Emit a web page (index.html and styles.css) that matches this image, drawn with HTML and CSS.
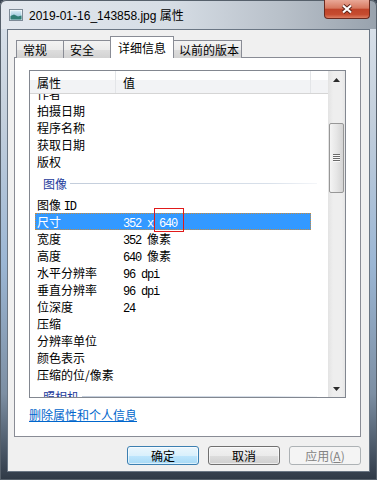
FILE: index.html
```html
<!DOCTYPE html>
<html lang="zh-CN">
<head>
    <meta charset="UTF-8">
    <meta name="viewport" content="width=device-width, initial-scale=1.0">
    <title>2019-01-16_143858.jpg 属性</title>
    <link rel="stylesheet" href="styles.css">
</head>
<body>
    <div class="window">
        <div class="titlebar">
            <svg class="app-icon" width="14" height="12" viewBox="0 0 14 12">
                <defs>
                    <linearGradient id="sky" x1="0" y1="0" x2="0" y2="1">
                        <stop offset="0" stop-color="#d9ecf5"/>
                        <stop offset="1" stop-color="#7fb6cf"/>
                    </linearGradient>
                </defs>
                <rect x="0.5" y="0.5" width="13" height="11" fill="#fff" stroke="#7d8a96"/>
                <rect x="1.5" y="1.5" width="11" height="9" fill="url(#sky)"/>
                <path d="M1.5 10.5 L1.5 7 L5 5.5 L9 7.5 L12.5 6.5 L12.5 10.5Z" fill="#2f7d74"/>
            </svg>
            <span class="title">2019-01-16_143858.jpg 属性</span>
            <div class="close">
                <svg width="12" height="10" viewBox="0 0 12 10">
                    <path d="M2 1.5 L10 8.5 M10 1.5 L2 8.5" stroke="#5a2218" stroke-width="4"/>
                    <path d="M2 1.5 L10 8.5 M10 1.5 L2 8.5" stroke="#fff" stroke-width="2.2"/>
                </svg>
            </div>
        </div>

        <div class="client">
            <div class="tabs">
                <div class="tab tab-general">常规</div>
                <div class="tab tab-security">安全</div>
                <div class="tab tab-details active">详细信息</div>
                <div class="tab tab-versions">以前的版本</div>
            </div>

            <div class="panel">
                <div class="list">
                    <div class="list-main">
                        <div class="head">
                            <div class="col-name">属性</div>
                            <div class="col-value">值</div>
                            <div class="col-fill"></div>
                        </div>
                        <div class="rows">
                            <div class="rows-inner">
                                <div class="row"><span class="k">作者</span></div>
                                <div class="row"><span class="k">拍摄日期</span></div>
                                <div class="row"><span class="k">程序名称</span></div>
                                <div class="row"><span class="k">获取日期</span></div>
                                <div class="row"><span class="k">版权</span></div>
                                <div class="group">图像</div>
                                <div class="row"><span class="k">图像 <span class="asc">ID</span></span></div>
                                <div class="row sel">
                                    <span class="k">尺寸</span>
                                    <span class="v"><span class="asc">352 x 640</span></span>
                                    <span class="mark"></span>
                                </div>
                                <div class="row"><span class="k">宽度</span><span class="v"><span class="asc">352 </span>像素</span></div>
                                <div class="row"><span class="k">高度</span><span class="v"><span class="asc">640 </span>像素</span></div>
                                <div class="row"><span class="k">水平分辨率</span><span class="v"><span class="asc">96 dpi</span></span></div>
                                <div class="row"><span class="k">垂直分辨率</span><span class="v"><span class="asc">96 dpi</span></span></div>
                                <div class="row"><span class="k">位深度</span><span class="v"><span class="asc">24</span></span></div>
                                <div class="row"><span class="k">压缩</span></div>
                                <div class="row"><span class="k">分辨率单位</span></div>
                                <div class="row"><span class="k">颜色表示</span></div>
                                <div class="row"><span class="k">压缩的位/像素</span></div>
                                <div class="group">照相机</div>
                            </div>
                        </div>
                    </div>
                    <div class="scroll">
                        <div class="sb-btn">
                            <svg width="7" height="4" viewBox="0 0 7 4"><path d="M0 4 L3.5 0 L7 4Z" fill="#2b2b2b"/></svg>
                        </div>
                        <div class="thumb">
                            <svg width="7" height="8" viewBox="0 0 7 8">
                                <path d="M0 0.5H7M0 2.5H7M0 4.5H7M0 6.5H7" stroke="#6a6a6a"/>
                                <path d="M0 1.5H7M0 3.5H7M0 5.5H7M0 7.5H7" stroke="#fafafa"/>
                            </svg>
                        </div>
                        <div class="sb-space"></div>
                        <div class="sb-btn">
                            <svg width="7" height="4" viewBox="0 0 7 4"><path d="M0 0 L7 0 L3.5 4Z" fill="#2b2b2b"/></svg>
                        </div>
                    </div>
                </div>
                <a class="remove-link" href="#">删除属性和个人信息</a>
            </div>

            <div class="buttons">
                <button class="btn btn-default">确定</button>
                <button class="btn">取消</button>
                <button class="btn" disabled>应用(<u>A</u>)</button>
            </div>
        </div>
    </div>
</body>
</html>
```

FILE: styles.css
```css
*{
    margin: 0;
    padding: 0;
    box-sizing: border-box;
}
body{
    width: 377px;
    height: 480px;
    overflow: hidden;
    background: #3a4452;
    font: 12px "Noto Sans CJK SC", "Liberation Sans", sans-serif;
    color: #000;
}
.window{
    width: 377px;
    height: 480px;
    display: flex;
    flex-direction: column;
    border-radius: 6px 6px 0 0;
    background: linear-gradient(to bottom, #dde4ec 0, #c3cfdc 25%, #9bb6d4 55%, #7d8fa3 82%, #2f3946 100%);
    box-shadow: inset 0 0 0 1px #56606b;
}
.titlebar{
    height: 29px;
    display: flex;
    align-items: center;
    padding-left: 9px;
    border-radius: 6px 6px 0 0;
    background: linear-gradient(to right, #e3e8ee 0, #d6dde5 45%, #b8c0c9 75%, #98a2ad 100%);
    box-shadow: inset 0 1px 0 #56606b, inset 1px 0 0 #56606b, inset -1px 0 0 #56606b;
}
.app-icon{
    margin-right: 6px;
}
.title{
    font: 12px "Liberation Sans", "Noto Sans CJK SC", sans-serif;
    color: #000;
}
.close{
    align-self: flex-start;
    margin-left: auto;
    margin-right: 7px;
    width: 46px;
    height: 19px;
    border: 1px solid #6b2a1f;
    border-top: 0;
    border-radius: 0 0 4px 4px;
    background: linear-gradient(to bottom, #e9a897 0, #d7785f 45%, #c0442a 52%, #c64b2f 80%, #dc7d62 100%);
    display: flex;
    align-items: center;
    justify-content: center;
}

.client{
    margin: 0 7px;
    height: 443px;
    background: #f0f0f0;
    border: 1px solid #6a7684;
}
.tabs{
    display: flex;
    align-items: flex-end;
    height: 28px;
    padding-left: 8px;
}
.tab{
    height: 18px;
    margin-right: -1px;
    padding-left: 6px;
    border: 1px solid #898c95;
    border-bottom: 0;
    background: linear-gradient(to bottom, #f3f3f3 0, #ebebeb 50%, #dedede 51%, #d2d2d2 100%);
    display: flex;
    align-items: center;
    white-space: nowrap;
}
.tab-general{ width: 48px; }
.tab-security{ width: 48px; }
.tab-details{ width: 64px; padding-left: 7px; }
.tab-versions{ width: 69px; padding-left: 5px; }
.tab.active{
    height: 22px;
    background: #fff;
    position: relative;
    z-index: 1;
    align-items: flex-start;
    padding-top: 2px;
}

.panel{
    margin: -1px 8px 0 6px;
    height: 380px;
    border: 1px solid #898c95;
    background: #fff;
    padding: 12px 0 0 14px;
}
.list{
    display: flex;
    width: 317px;
    height: 328px;
    border: 1px solid #828790;
}
.list-main{
    width: 298px;
    display: flex;
    flex-direction: column;
}
.head{
    height: 23px;
    display: flex;
    border-bottom: 1px solid #d5d5d5;
    background: linear-gradient(to bottom, #fff 0, #fff 40%, #f2f3f5 41%, #f2f3f5 100%);
}
.head div{
    display: flex;
    align-items: center;
}
.col-name{
    width: 86px;
    padding-left: 7px;
    border-right: 1px solid #e3e5e8;
}
.col-value{
    width: 195px;
    padding-left: 7px;
    border-right: 1px solid #e3e5e8;
}
.col-fill{
    flex: 1;
}
.rows{
    flex: 1;
    overflow: hidden;
}
.rows-inner{
    margin-top: -9px;
}
.row{
    position: relative;
    height: 17px;
    width: 276px;
    margin-left: 5px;
    display: flex;
    align-items: center;
    white-space: nowrap;
}
.k{
    width: 88px;
    padding-left: 2px;
}
.asc{
    font: 12px "Liberation Mono", monospace;
    letter-spacing: -1.2px;
    white-space: pre;
}
.row.sel{
    background: #3399ff;
    color: #fff;
    outline: 1px dotted #c98a3a;
    outline-offset: -1px;
}
.mark{
    position: absolute;
    left: 119px;
    top: -5px;
    width: 30px;
    height: 24px;
    border: 1px solid #e01a1a;
}
.group{
    height: 26px;
    display: flex;
    align-items: center;
    padding-left: 13px;
    color: #1e3c9c;
}
.group::after{
    content: "";
    flex: 1;
    height: 1px;
    margin: 0 11px 0 3px;
    background: linear-gradient(to right, #c3cddb, #d8e0ea 80%, #f4f6f9);
}

.scroll{
    width: 17px;
    display: flex;
    flex-direction: column;
    background: linear-gradient(to right, #e3e3e3 0, #eeeeee 30%, #eeeeee 80%, #e6e6e6 100%);
}
.sb-btn{
    height: 17px;
    display: flex;
    align-items: center;
    justify-content: center;
}
.thumb{
    margin: 35px 1px 0;
    height: 70px;
    border: 1px solid #979797;
    border-radius: 2px;
    background: linear-gradient(to right, #f4f4f4 0, #e6e6e6 50%, #d4d4d4 100%);
    display: flex;
    align-items: center;
    justify-content: center;
}
.sb-space{
    flex: 1;
}

.remove-link{
    display: inline-block;
    margin-top: 10px;
    line-height: 14px;
    color: #0066cc;
    text-decoration: underline;
}

.buttons{
    display: flex;
    justify-content: flex-end;
    gap: 9px;
    padding: 9px 8px 0 0;
}
.btn{
    width: 72px;
    height: 19px;
    border: 1px solid #707070;
    border-radius: 3px;
    font: 12px "Noto Sans CJK SC", "Liberation Sans", sans-serif;
    color: #000;
    background: linear-gradient(to bottom, #f2f2f2 0, #ebebeb 50%, #dddddd 51%, #cfcfcf 100%);
    box-shadow: inset 0 0 0 1px rgba(255,255,255,.6);
}
.btn-default{
    border-color: #3c7fb1;
    background: linear-gradient(to bottom, #eaf6fd 0, #d9f0fc 50%, #bee6fd 51%, #a7d9f5 100%);
}
.btn:disabled{
    border-color: #adb2b5;
    background: #f4f4f4;
    color: #838383;
    box-shadow: none;
}
```
